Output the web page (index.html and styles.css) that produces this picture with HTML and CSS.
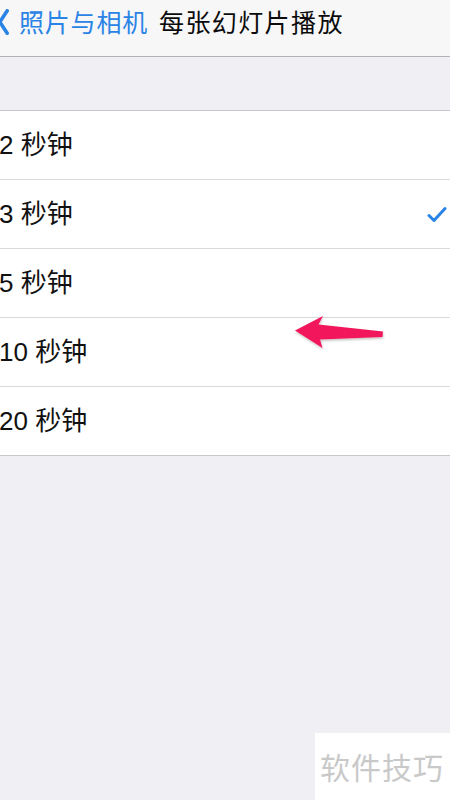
FILE: index.html
```html
<!DOCTYPE html>
<html lang="zh">
<head>
<meta charset="utf-8">
<link rel="stylesheet" href="styles.css">
</head>
<body>
<div class="screen">
  <header class="nav">
    <svg class="chev" width="11" height="26" viewBox="0 0 11 26"><polyline points="9.2,1.8 1.8,13 9.2,24.2" fill="none" stroke="#2a84e6" stroke-width="3.6" stroke-linecap="round" stroke-linejoin="round"/></svg>
    <span class="back">照片与相机</span>
    <span class="title">每张幻灯片播放</span>
  </header>
  <div class="gap"></div>
  <ul class="list">
    <li class="row"><span class="label">2 秒钟</span></li>
    <li class="row"><span class="label">3 秒钟</span>
      <svg class="check" width="20" height="18" viewBox="0 0 20 18"><polyline points="2,9.5 7,14.5 18,2.5" fill="none" stroke="#2a84e6" stroke-width="3" stroke-linecap="round" stroke-linejoin="round"/></svg>
    </li>
    <li class="row"><span class="label">5 秒钟</span></li>
    <li class="row"><span class="label">10 秒钟</span></li>
    <li class="row"><span class="label">20 秒钟</span></li>
  </ul>
  <svg class="arrow" width="100" height="40" viewBox="285 310 100 40">
    <defs><filter id="sh" x="-10%" y="-20%" width="130%" height="150%"><feDropShadow dx="0.5" dy="1.5" stdDeviation="1.2" flood-color="#000" flood-opacity="0.25"/></filter></defs>
    <polygon filter="url(#sh)" fill="#f2195b" points="295,330.5 323,316 318.5,324.5 383,331.5 382.5,337 320,339.5 322.5,348"/>
  </svg>
  <div class="mark">软件技巧</div>
</div>
</body>
</html>
```
FILE: styles.css
```css
* { box-sizing: border-box; margin: 0; padding: 0; }
html, body { width: 450px; height: 800px; overflow: hidden; }
body {
  background: #efeff4;
  font-family: "Noto Sans CJK SC", "Noto Sans", sans-serif;
  color: #111;
}
.screen { position: relative; width: 450px; height: 800px; }
.nav {
  height: 57px;
  background: #f7f7f8;
  border-bottom: 1px solid #b4b4b6;
  display: flex;
  align-items: center;
  padding-bottom: 13px;
}
.chev { margin-left: -2px; margin-right: 10px; flex: none; }
.back { color: #2a84e6; font-size: 25px; line-height: 1; letter-spacing: 0.8px; }
.title { color: #0b0b0b; font-size: 25px; line-height: 1; margin-left: 11px; letter-spacing: 1.4px; }
.gap { height: 53px; }
.list {
  list-style: none;
  background: #fff;
  border-top: 1px solid #c8c7cc;
  border-bottom: 1px solid #c8c7cc;
}
.row {
  height: 69px;
  display: flex;
  align-items: center;
  justify-content: space-between;
  border-bottom: 1px solid #d9d9dc;
  padding-right: 3px;
}
.row:last-child { border-bottom: none; height: 68px; }
.label {
  font-family: "Liberation Sans", "Noto Sans CJK SC", sans-serif;
  font-size: 26px;
  line-height: 1;
  margin-left: -1px;
  color: #111;
}
.check { margin-top: 2px; }
.arrow { position: absolute; left: 285px; top: 310px; }
.mark {
  position: absolute;
  left: 315px;
  top: 733px;
  width: 135px;
  height: 67px;
  background: #fff;
  color: #c9c9c9;
  font-size: 30px;
  line-height: 1;
  padding: 18px 0 0 5px;
  letter-spacing: 1px;
  white-space: nowrap;
}
```
